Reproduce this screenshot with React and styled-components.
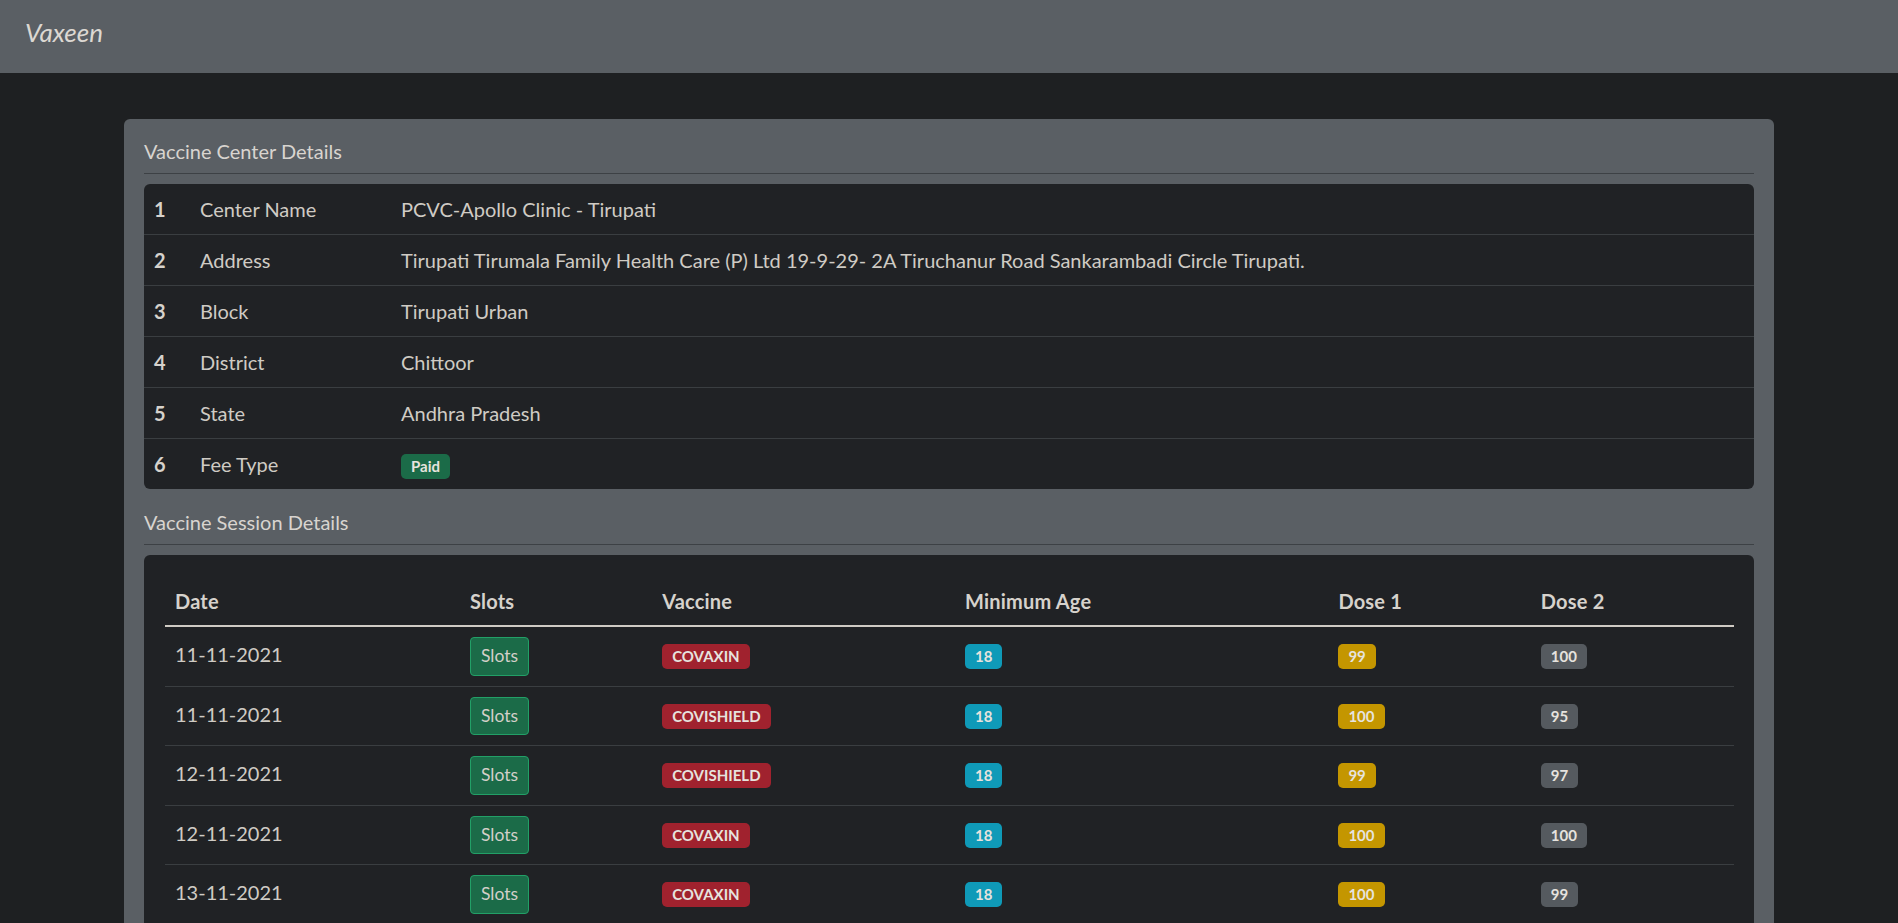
import { createGlobalStyle } from 'styled-components';
import styled from 'styled-components';

const GlobalStyle = createGlobalStyle`
  * {
    box-sizing: border-box;
  }
  body {
    margin: 0;
    background: #1e2022;
    color: #cfcbc4;
    font-family: Lato, 'Noto Sans', sans-serif;
    font-size: 20px;
    line-height: 30px;
  }
`;

const Navbar = styled.nav`
  height: 73px;
  background: #5a5f64;
  display: flex;
  align-items: center;
  padding: 0 25px 9px;
`;

const Brand = styled.span`
  font-size: 26px;
  font-style: italic;
  color: #dcd8d2;
  line-height: 1;
`;

const Main = styled.main`
  padding-top: 46px;
  display: flex;
  justify-content: center;
`;

const Card = styled.section`
  width: 1650px;
  background: #5a5f64;
  border-radius: 6px;
  padding: 20px;
`;

const SectionTitle = styled.div`
  color: #d8d4cf;
  line-height: 24px;
  margin-top: ${(p) => (p.first ? '0' : '21px')};
  margin-bottom: 10px;
`;

const Divider = styled.hr`
  border: 0;
  border-top: 1px solid #3d4145;
  margin: 0 0 10px;
`;

const DarkTable = styled.table`
  width: 100%;
  border-collapse: collapse;
  table-layout: fixed;
  background: #202225;
  border-radius: 6px;
  overflow: hidden;
`;

const Col = styled.col`
  width: ${(p) => p.w};
`;

const InfoRow = styled.tr`
  & + & td {
    border-top: 1px solid #3a3e41;
  }
`;

const Cell = styled.td`
  padding: 10px;
  vertical-align: ${(p) => p.align || 'top'};
  font-weight: ${(p) => (p.bold ? 700 : 400)};
  color: ${(p) => (p.bold ? '#d6d2cc' : '#cfcbc4')};
`;

const SessionBox = styled.div`
  background: #202225;
  border-radius: 6px;
  padding: 20px 20px 20px 21px;
`;

const SessionTable = styled.table`
  width: 100%;
  border-collapse: collapse;
  table-layout: fixed;
`;

const HeadCell = styled.th`
  text-align: left;
  padding: 11px 10px 9px;
  font-weight: 700;
  letter-spacing: 0.2px;
  color: #d6d2cc;
  border-bottom: 2px solid #cfcbc4;
  vertical-align: bottom;
`;

const BodyRow = styled.tr`
  & td {
    border-bottom: 1px solid #3a3e41;
  }
`;

const SlotsButton = styled.button`
  font-family: inherit;
  font-size: 17.5px;
  line-height: 26.5px;
  padding: 5px 10px;
  color: #d3cfc8;
  background: #1b6b48;
  border: 1px solid #22a067;
  border-radius: 4px;
  cursor: pointer;
`;

const badgeColors = {
  success: '#1b6b48',
  danger: '#a0222e',
  info: '#0f9ab8',
  warning: '#c49600',
  secondary: '#555a5f',
};

const Badge = styled.span`
  display: inline-block;
  font-size: 15px;
  font-weight: 700;
  line-height: 1;
  padding: 5px 10px;
  border-radius: 5px;
  color: #e6e3de;
  background: ${(p) => badgeColors[p.tone]};
  vertical-align: baseline;
`;

const details = [
  ['Center Name', 'PCVC-Apollo Clinic - Tirupati'],
  ['Address', 'Tirupati Tirumala Family Health Care (P) Ltd 19-9-29- 2A Tiruchanur Road Sankarambadi Circle Tirupati.'],
  ['Block', 'Tirupati Urban'],
  ['District', 'Chittoor'],
  ['State', 'Andhra Pradesh'],
  ['Fee Type', null],
];

const sessions = [
  { date: '11-11-2021', vaccine: 'COVAXIN', age: 18, dose1: 99, dose2: 100 },
  { date: '11-11-2021', vaccine: 'COVISHIELD', age: 18, dose1: 100, dose2: 95 },
  { date: '12-11-2021', vaccine: 'COVISHIELD', age: 18, dose1: 99, dose2: 97 },
  { date: '12-11-2021', vaccine: 'COVAXIN', age: 18, dose1: 100, dose2: 100 },
  { date: '13-11-2021', vaccine: 'COVAXIN', age: 18, dose1: 100, dose2: 99 },
];

function App() {
  return (
    <>
      <GlobalStyle />
      <Navbar>
        <Brand>Vaxeen</Brand>
      </Navbar>
      <Main>
        <Card>
          <SectionTitle first>Vaccine Center Details</SectionTitle>
          <Divider />
          <DarkTable>
            <colgroup>
              <Col w='46px' />
              <Col w='201px' />
              <Col w='auto' />
            </colgroup>
            <tbody>
              {details.map(([label, value], i) => (
                <InfoRow key={label}>
                  <Cell bold>{i + 1}</Cell>
                  <Cell>{label}</Cell>
                  <Cell>{value ?? <Badge tone='success'>Paid</Badge>}</Cell>
                </InfoRow>
              ))}
            </tbody>
          </DarkTable>

          <SectionTitle>Vaccine Session Details</SectionTitle>
          <Divider />
          <SessionBox>
            <SessionTable>
              <colgroup>
                <Col w='18.8%' />
                <Col w='12.25%' />
                <Col w='19.3%' />
                <Col w='23.8%' />
                <Col w='12.9%' />
                <Col w='12.95%' />
              </colgroup>
              <thead>
                <tr>
                  <HeadCell>Date</HeadCell>
                  <HeadCell>Slots</HeadCell>
                  <HeadCell>Vaccine</HeadCell>
                  <HeadCell>Minimum Age</HeadCell>
                  <HeadCell>Dose 1</HeadCell>
                  <HeadCell>Dose 2</HeadCell>
                </tr>
              </thead>
              <tbody>
                {sessions.map((s, i) => (
                  <BodyRow key={i}>
                    <Cell align='baseline'>{s.date}</Cell>
                    <Cell align='baseline'>
                      <SlotsButton type='button'>Slots</SlotsButton>
                    </Cell>
                    <Cell align='baseline'>
                      <Badge tone='danger'>{s.vaccine}</Badge>
                    </Cell>
                    <Cell align='baseline'>
                      <Badge tone='info'>{s.age}</Badge>
                    </Cell>
                    <Cell align='baseline'>
                      <Badge tone='warning'>{s.dose1}</Badge>
                    </Cell>
                    <Cell align='baseline'>
                      <Badge tone='secondary'>{s.dose2}</Badge>
                    </Cell>
                  </BodyRow>
                ))}
              </tbody>
            </SessionTable>
          </SessionBox>
        </Card>
      </Main>
    </>
  );
}

export default App;
